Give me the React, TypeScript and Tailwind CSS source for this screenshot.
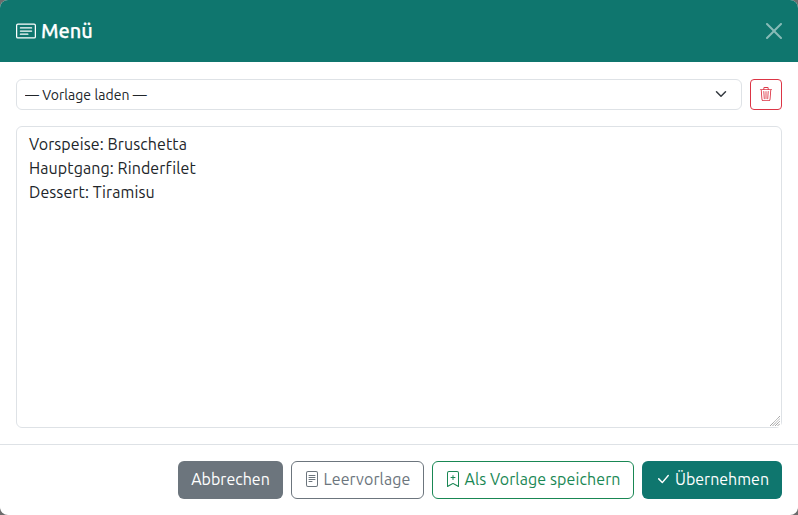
import { BsCardText, BsTrash3, BsFileText, BsBookmarkPlus, BsCheckLg } from "react-icons/bs";

export default function App() {
  return (
    <div className="h-[515px] w-[798px] overflow-hidden bg-[#6c6c6c] font-['Ubuntu','Noto_Sans',sans-serif] text-[#212529]">
      <div className="flex h-full flex-col overflow-hidden rounded-[8px] bg-white">
        <header className="flex h-[63px] shrink-0 items-center justify-between border-b border-white bg-[#0f766e] px-4 text-white">
          <h1 className="flex items-center gap-[5px] text-[20px] font-medium leading-[24px] [-webkit-text-stroke:0.25px_white]">
            <BsCardText className="h-5 w-5" />
            Menü
          </h1>
          <button className="flex items-center justify-center text-white/50">
            <svg viewBox="0 0 16 16" className="h-4 w-4" fill="currentColor">
              <path d="M.293.293a1 1 0 0 1 1.414 0L8 6.586 14.293.293a1 1 0 1 1 1.414 1.414L9.414 8l6.293 6.293a1 1 0 0 1-1.414 1.414L8 9.414l-6.293 6.293a1 1 0 0 1-1.414-1.414L6.586 8 .293 1.707a1 1 0 0 1 0-1.414z" />
            </svg>
          </button>
        </header>
        <main className="flex flex-1 flex-col gap-4 p-4">
          <div className="flex gap-2">
            <div className="relative flex-1">
              <select className="h-[31px] w-full appearance-none rounded-[6px] border border-[#dee2e6] bg-white pl-2 pr-9 pt-[2px] text-[14px] leading-[21px] tracking-[0.05px]">
                <option>— Vorlage laden —</option>
              </select>
              <svg viewBox="0 0 16 16" className="pointer-events-none absolute right-[15px] top-[9px] h-3 w-3" fill="none" stroke="#343a40" strokeWidth="2" strokeLinecap="round" strokeLinejoin="round">
                <path d="m2 5 6 6 6-6" />
              </svg>
            </div>
            <button className="flex h-[31px] w-8 items-center justify-center rounded-[4px] border border-[#dc3545] pb-[2px] text-[#dc3545]">
              <BsTrash3 className="h-[14px] w-[14px]" />
            </button>
          </div>
          <div className="relative flex min-h-0 flex-1">
            <textarea
              className="min-h-0 flex-1 resize-y rounded-[6px] border border-[#dee2e6] px-3 pb-[6px] pt-[5px] text-[16px] leading-[24px] tracking-[0.1px] outline-none [&::-webkit-resizer]:bg-white"
              defaultValue={"Vorspeise: Bruschetta\nHauptgang: Rinderfilet\nDessert: Tiramisu"}
            />
            <svg viewBox="0 0 10 10" className="pointer-events-none absolute bottom-[2px] right-[2px] h-[10px] w-[10px]" fill="none" stroke="#808080" strokeWidth="1" strokeDasharray="1 0.6">
              <path d="M0 10 10 0M2.5 10 10 2.5M5 10 10 5M7.5 10 10 7.5" />
            </svg>
          </div>
        </main>
        <footer className="flex shrink-0 justify-end gap-2 border-t border-[#dee2e6] p-4 text-[16px] leading-[24px]">
          <button className="h-[38px] w-[105px] rounded-[6px] bg-[#6c757d] pb-[2px] text-white">Abbrechen</button>
          <button className="flex h-[38px] w-[133px] items-center justify-center gap-[3px] rounded-[6px] border border-[#6c757d] pb-[2px] tracking-[0.1px] text-[#6c757d]">
            <BsFileText className="h-4 w-4" />
            Leervorlage
          </button>
          <button className="flex h-[38px] w-[202px] items-center justify-center gap-[3px] rounded-[6px] border border-[#198754] pb-[2px] tracking-[0.1px] text-[#198754]">
            <BsBookmarkPlus className="h-4 w-4" />
            Als Vorlage speichern
          </button>
          <button className="flex h-[38px] w-[140px] items-center justify-center gap-1 rounded-[6px] bg-[#0f766e] pb-[2px] text-white">
            <BsCheckLg className="h-4 w-4" />
            Übernehmen
          </button>
        </footer>
      </div>
    </div>
  );
}
